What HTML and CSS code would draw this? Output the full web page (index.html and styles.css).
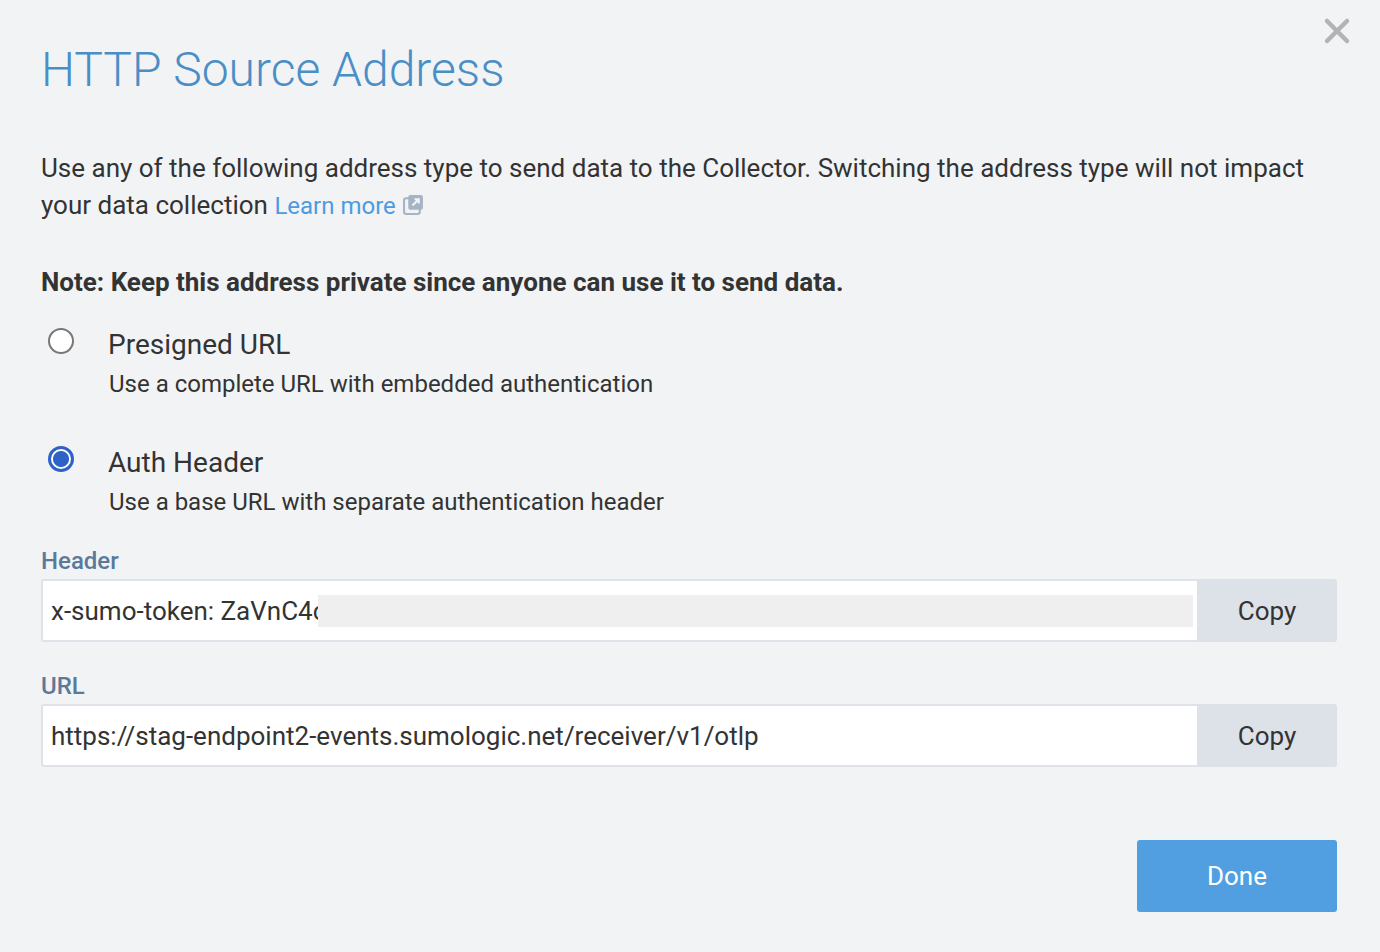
FILE: index.html
```html
<!DOCTYPE html>
<html>
<head>
<meta charset="utf-8">
<link rel="stylesheet" href="styles.css">
</head>
<body>
<div class="modal">
  <button class="close" aria-label="Close">
    <svg width="28" height="28" viewBox="0 0 28 28"><path d="M4 4 L24 24 M24 4 L4 24" stroke="#b3b3b3" stroke-width="4.5" stroke-linecap="round"/></svg>
  </button>
  <h1 class="title">HTTP Source Address</h1>
  <p class="intro">Use any of the following address type to send data to the Collector. Switching the address type will not impact your data collection <a class="link" href="#">Learn more</a> <svg class="ext" width="21" height="21" viewBox="0 0 20 20"><rect x="1" y="4" width="15" height="15" rx="2" fill="none" stroke="#a5b3c6" stroke-width="2"/><rect x="5" y="1" width="14" height="14" rx="2" fill="#a5b3c6"/><path d="M9 11 L15 5 M11 5 H15 V9" stroke="#f2f3f5" stroke-width="2" fill="none"/></svg></p>
  <p class="note">Note: Keep this address private since anyone can use it to send data.</p>

  <div class="options">
    <label class="option">
      <span class="radio"></span>
      <span class="opt-text">
        <span class="opt-title">Presigned URL</span>
        <span class="opt-desc">Use a complete URL with embedded authentication</span>
      </span>
    </label>
    <label class="option">
      <span class="radio checked"></span>
      <span class="opt-text">
        <span class="opt-title">Auth Header</span>
        <span class="opt-desc">Use a base URL with separate authentication header</span>
      </span>
    </label>
  </div>

  <div class="field">
    <div class="field-label">Header</div>
    <div class="input-row">
      <div class="input"><span>x-sumo-token: ZaVnC4c</span><span class="blur"></span></div>
      <button class="copy">Copy</button>
    </div>
  </div>
  <div class="field">
    <div class="field-label">URL</div>
    <div class="input-row">
      <div class="input"><span>https://stag-endpoint2-events.sumologic.net/receiver/v1/otlp</span></div>
      <button class="copy">Copy</button>
    </div>
  </div>

  <div class="footer">
    <button class="done">Done</button>
  </div>
</div>
</body>
</html>
```

FILE: styles.css
```css
* { box-sizing: border-box; }
html, body { margin: 0; padding: 0; }
body {
  background: #f2f3f5;
  font-family: Roboto, "Liberation Sans", sans-serif;
  color: #333;
  width: 1380px;
  height: 952px;
  overflow: hidden;
}
.modal {
  position: relative;
  padding: 42px 43px 0 41px;
}
.close {
  position: absolute;
  top: 17px;
  right: 29px;
  background: none;
  border: 0;
  padding: 0;
  width: 28px;
  height: 28px;
}
.title {
  margin: 0;
  font-weight: 300;
  font-size: 48px;
  line-height: 56px;
  color: #4a8ec6;
}
.intro {
  margin: 52px 0 0;
  font-size: 26px;
  line-height: 37px;
  color: #333;
}
.link { color: #4c9be0; text-decoration: none; font-size: 24px; }
.ext { vertical-align: -1px; margin-left: 1px; }
.note {
  margin: 41px 0 0;
  font-size: 26px;
  font-weight: 700;
  line-height: 32px;
  color: #333;
}
.options { margin-top: 30px; display: flex; flex-direction: column; gap: 46px; }
.option { display: flex; align-items: flex-start; gap: 34px; padding-left: 7px; }
.radio {
  width: 26px; height: 26px;
  border-radius: 50%;
  border: 2px solid #777;
  background: #fff;
  margin-top: 0;
  flex: none;
}
.radio.checked {
  border: 3px solid #2f62c7;
  background: radial-gradient(circle, #2f62c7 0 7.5px, #fff 8.5px);
}
.opt-text { display: flex; flex-direction: column; }
.opt-title { font-size: 28px; line-height: 32px; color: #333; margin-top: 1px; }
.opt-desc { font-size: 24px; line-height: 32px; margin-top: 7px; margin-left: 1px; color: #333; }
.field { margin-top: 29px; }
.options + .field { margin-top: 28px; }
.field-label {
  font-size: 24px;
  font-weight: 500;
  color: #5b7a99;
  line-height: 30px;
  margin-bottom: 3px;
}
.input-row { display: flex; height: 63px; width: 1296px; }
.input {
  flex: 1;
  background: #fff;
  border: 2px solid #dfe3e9;
  border-right: 0;
  border-radius: 3px 0 0 3px;
  display: flex;
  align-items: center;
  padding-left: 8px;
  font-size: 26px;
  color: #333;
  overflow: hidden;
  white-space: nowrap;
}
.blur {
  flex: 1;
  height: 32px;
  background: #efefef;
  margin-right: 4px;
  margin-left: -8px;
}
.copy {
  width: 140px;
  border: 0;
  background: #dde1e8;
  border-radius: 0 3px 3px 0;
  font-family: inherit;
  font-size: 26px;
  color: #333;
}
.footer { display: flex; justify-content: flex-end; margin-top: 73px; }
.done {
  width: 200px; height: 72px;
  background: #519fe0;
  color: #fff;
  border: 0;
  border-radius: 3px;
  font-family: inherit;
  font-size: 26px;
}
```
